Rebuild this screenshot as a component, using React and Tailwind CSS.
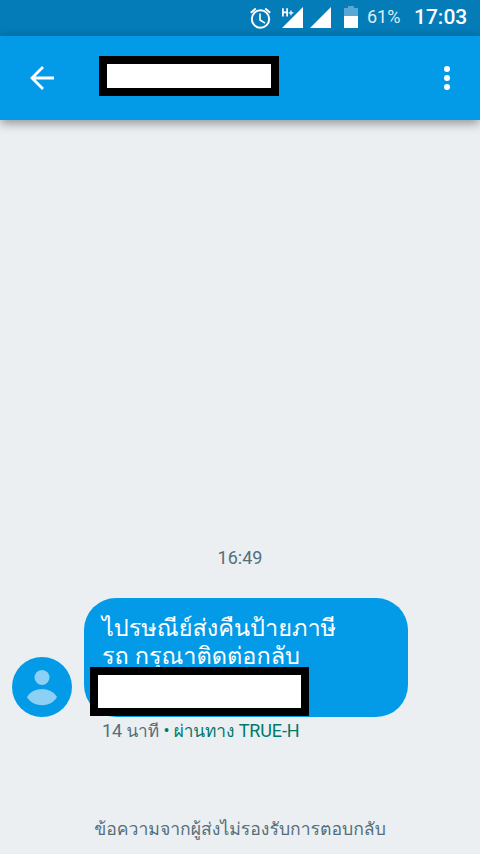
function StatusBar() {
  return (
    <div className="flex h-9 shrink-0 items-start bg-[#037cb8] text-white">
      <svg className="h-9 w-[360px]" viewBox="0 0 360 36" fill="none">
        <g stroke="#fff" strokeWidth="2">
          <circle cx="260.5" cy="19" r="8.7" />
          <path d="M260 13.5V20l5 3.2" strokeWidth="1.6" />
          <path d="M250.8 12.7l5-4.2M270.2 12.7l-5-4.2" />
        </g>
        <path d="M303 7v21h-21zM331 7v21h-21z" fill="#fff" />
        <path d="M282 7h8v9h-8zM289 7h5v8h-5z" fill="#037cb8" />
        <path d="M282.9 8.3v8.2M287.1 8.3v8.2M283 12.3h4" stroke="#fff" strokeWidth="1.7" />
        <path d="M288.6 12.8h4.8M291 10.4v4.8" stroke="#fff" strokeWidth="1.3" />
        <path d="M348 6h6v2h4v8h-14V8h4z" fill="#57a8d2" />
        <path d="M344 16h14v12h-14z" fill="#fff" />
      </svg>
      <span className="w-[54px] pl-[7px] text-[18px] leading-[34px] text-[#dceef7]">61%</span>
      <span className="text-[21px] font-medium leading-[34px]">17:03</span>
    </div>
  );
}

function Header() {
  return (
    <header className="z-10 flex h-[84px] shrink-0 items-center bg-[#039be8] shadow-[0_3px_10px_rgba(0,0,0,0.4)]">
      <svg className="ml-[30px] h-6 w-6" viewBox="0 0 24 24" fill="none" stroke="#fff" strokeWidth="2.8">
        <path d="M24 12H2M13 1L2 12l11 11" />
      </svg>
      <div className="mb-1 ml-[45px] h-10 w-[180px] border-8 border-black bg-white" />
      <svg className="ml-auto mr-[30px] h-6 w-1.5" viewBox="0 0 6 24" fill="#fff">
        <circle cx="3" cy="3" r="3" />
        <circle cx="3" cy="12" r="3" />
        <circle cx="3" cy="21" r="3" />
      </svg>
    </header>
  );
}

function Message() {
  return (
    <div className="flex items-end gap-3 pl-3">
      <svg className="h-[60px] w-[60px] shrink-0" viewBox="0 0 60 60">
        <circle cx="30" cy="30" r="30" fill="#039be8" />
        <g fill="#8cd0f5">
          <circle cx="30" cy="20.5" r="7.5" />
          <path d="M15 40C21 29.300 39 29.300 45 40C39 51 21 51 15 40z" />
        </g>
      </svg>
      <div className="relative h-[119px] w-[324px] rounded-[32px] bg-[#039be8] pl-[18px] pt-4 text-[23.5px] leading-[28px] text-white">
        <p className="whitespace-nowrap">ไปรษณีย์ส่งคืนป้ายภาษี</p>
        <p className="whitespace-nowrap">รถ กรุณาติดต่อกลับ</p>
        <div className="absolute left-[6px] top-[69px] h-[49px] w-[219px] border-8 border-black bg-white" />
      </div>
    </div>
  );
}

export default function App() {
  return (
    <div className="flex h-[854px] w-[480px] flex-col overflow-hidden bg-[#ebeff2] font-[Roboto,Loma,sans-serif]">
      <StatusBar />
      <Header />
      <main className="flex flex-1 flex-col justify-end text-[18px] text-[#546e7a]">
        <p className="mb-[28px] h-6 text-center leading-6">16:49</p>
        <Message />
        <p className="h-7 whitespace-nowrap pl-[102px] leading-7 tracking-[-0.1px]">
          <span>14 <span className="text-[17.3px]">นาที</span></span>
          <span className="text-[#00796b]"> • <span className="text-[17.3px]">ผ่านทาง</span> TRUE-H</span>
        </p>
        <p className="mb-[11px] mt-[70px] h-7 whitespace-nowrap text-center text-[17.6px] leading-7">
          ข้อความจากผู้ส่งไม่รองรับการตอบกลับ
        </p>
      </main>
    </div>
  );
}
